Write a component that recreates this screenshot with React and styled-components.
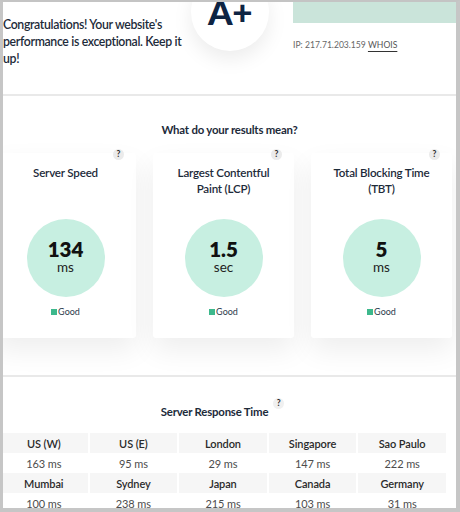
import React from "react";
import styled, { createGlobalStyle } from "styled-components";

const Global = createGlobalStyle`
  html, body { margin: 0; padding: 0; background: #ffffff; }
  body { font-family: Lato, "Liberation Sans", sans-serif; color: #1d2b3a; }
  * { box-sizing: border-box; }
`;

const Frame = styled.div`
  width: 460px;
  height: 512px;
  overflow: hidden;
  background: #ffffff;
  border-top: 2px solid #c4c4c4;
  border-left: 3px solid #c6c6c6;
  border-right: 4px solid #c6c6c6;
  border-bottom: 4px solid #c6c6c6;
`;

const TopRow = styled.div`
  display: flex;
  height: 92px;
`;

const Congrats = styled.p`
  margin: 0;
  width: 188px;
  flex-shrink: 0;
  padding-top: 14px;
  padding-right: 4px;
  font-size: 12.3px;
  line-height: 17px;
  font-weight: 600;
  letter-spacing: -0.35px;
  color: #1d2b3a;
`;

const GradeCircle = styled.div`
  width: 78px;
  height: 78px;
  flex-shrink: 0;
  margin-top: -29px;
  border-radius: 50%;
  background: #ffffff;
  box-shadow: 0 8px 20px rgba(0, 0, 0, 0.08);
  display: flex;
  justify-content: center;
  padding-top: 21px;
`;

const Grade = styled.span`
  font-size: 35px;
  line-height: 35px;
  font-weight: 900;
  color: #0e2443;
  letter-spacing: -0.5px;
`;

const RightCol = styled.div`
  flex: 1;
  margin-left: 24px;
`;

const GreenBar = styled.div`
  height: 21px;
  background: #cae4da;
`;

const IpLine = styled.div`
  margin-top: 15px;
  font-size: 8.6px;
  line-height: 14px;
  color: #666666;
`;

const Whois = styled.span`
  color: #555555;
  text-decoration: underline;
  text-decoration-color: #333333;
  text-underline-offset: 3px;
`;

const Divider = styled.div`
  height: 2px;
  background: #e9e9e9;
`;

const Section = styled.section`
  padding-top: ${(p) => p.$top}px;
  padding-bottom: ${(p) => p.$bottom || 0}px;
`;

const SectionTitle = styled.h2`
  margin: 0;
  display: flex;
  justify-content: center;
  font-size: 11.4px;
  line-height: 16px;
  font-weight: 700;
  letter-spacing: -0.2px;
  color: #1d2b3a;
  padding-right: ${(p) => p.$shift || 0}px;
`;

const Cards = styled.div`
  margin-top: 15px;
  margin-left: -8px;
  display: grid;
  grid-template-columns: repeat(3, 141px);
  column-gap: 17px;
`;

const Card = styled.div`
  position: relative;
  height: 185px;
  background: #ffffff;
  border-radius: 3px;
  box-shadow: 0 12px 28px rgba(0, 0, 0, 0.07);
  padding-top: 12px;
  display: flex;
  flex-direction: column;
  align-items: center;
`;

const Help = styled.span`
  width: 11px;
  height: 11px;
  border-radius: 50%;
  background: #ebebeb;
  color: #2a2a2a;
  font-size: 8.5px;
  line-height: 11px;
  font-weight: 700;
  letter-spacing: 0;
  text-align: center;
`;

const CardHelp = styled(Help)`
  position: absolute;
  top: -4px;
  right: 12px;
`;

const TitleHelp = styled(Help)`
  margin-left: 5px;
  margin-top: -6px;
  background: #f0f0f0;
`;

const CardTitle = styled.div`
  height: 32px;
  text-align: center;
  font-size: 11.6px;
  line-height: 16px;
  font-weight: 600;
  letter-spacing: -0.2px;
  color: #1d2b3a;
  padding: 0 16px;
`;

const Metric = styled.div`
  margin-top: 22px;
  width: 78px;
  height: 78px;
  border-radius: 50%;
  background: #c7efe1;
  display: flex;
  flex-direction: column;
  align-items: center;
  justify-content: center;
  padding-bottom: 2px;
`;

const MetricValue = styled.div`
  font-size: 20.5px;
  line-height: 21px;
  font-weight: 800;
  color: #111111;
`;

const MetricUnit = styled.div`
  font-size: 13.5px;
  line-height: 15px;
  color: #222222;
`;

const Legend = styled.div`
  margin-top: 9px;
  display: flex;
  align-items: center;
  gap: 1px;
  font-size: 9px;
  line-height: 12px;
  color: #2a3a4a;
`;

const Swatch = styled.span`
  width: 6px;
  height: 6px;
  background: #3db88c;
`;

const Table = styled.div`
  margin-top: 13px;
  margin-left: -3px;
  display: grid;
  grid-template-columns: repeat(5, 87.6px);
  column-gap: 2px;
`;

const Cell = styled.div`
  height: 20px;
  display: flex;
  align-items: center;
  justify-content: center;
  font-size: 11px;
  letter-spacing: -0.1px;
  background: ${(p) => (p.$head ? "#f6f6f6" : "#ffffff")};
  font-weight: ${(p) => (p.$head ? 600 : 400)};
  color: ${(p) => (p.$head ? "#2a2a2a" : "#4d4d4d")};
`;

const metrics = [
  { title: "Server Speed", value: "134", unit: "ms" },
  { title: "Largest Contentful Paint (LCP)", value: "1.5", unit: "sec" },
  { title: "Total Blocking Time (TBT)", value: "5", unit: "ms" },
];

const rows = [
  [
    ["US (W)", "163 ms"],
    ["US (E)", "95 ms"],
    ["London", "29 ms"],
    ["Singapore", "147 ms"],
    ["Sao Paulo", "222 ms"],
  ],
  [
    ["Mumbai", "100 ms"],
    ["Sydney", "238 ms"],
    ["Japan", "215 ms"],
    ["Canada", "103 ms"],
    ["Germany", "31 ms"],
  ],
];

export default function App() {
  return (
    <>
      <Global />
      <Frame>
        <TopRow>
          <Congrats>
            Congratulations! Your website's performance is exceptional. Keep it up!
          </Congrats>
          <GradeCircle>
            <Grade>A+</Grade>
          </GradeCircle>
          <RightCol>
            <GreenBar />
            <IpLine>
              IP: 217.71.203.159 <Whois>WHOIS</Whois>
            </IpLine>
          </RightCol>
        </TopRow>
        <Divider />
        <Section $top={26} $bottom={37}>
          <SectionTitle>What do your results mean?</SectionTitle>
          <Cards>
            {metrics.map((m) => (
              <Card key={m.title}>
                <CardHelp>?</CardHelp>
                <CardTitle>{m.title}</CardTitle>
                <Metric>
                  <MetricValue>{m.value}</MetricValue>
                  <MetricUnit>{m.unit}</MetricUnit>
                </Metric>
                <Legend>
                  <Swatch />
                  Good
                </Legend>
              </Card>
            ))}
          </Cards>
        </Section>
        <Divider />
        <Section $top={27}>
          <SectionTitle $shift={14}>
            Server Response Time
            <TitleHelp>?</TitleHelp>
          </SectionTitle>
          <Table>
            {rows.map((row, i) => (
              <React.Fragment key={i}>
                {row.map(([city]) => (
                  <Cell $head key={city}>
                    {city}
                  </Cell>
                ))}
                {row.map(([city, ms]) => (
                  <Cell key={city + "v"}>{ms}</Cell>
                ))}
              </React.Fragment>
            ))}
          </Table>
        </Section>
      </Frame>
    </>
  );
}
